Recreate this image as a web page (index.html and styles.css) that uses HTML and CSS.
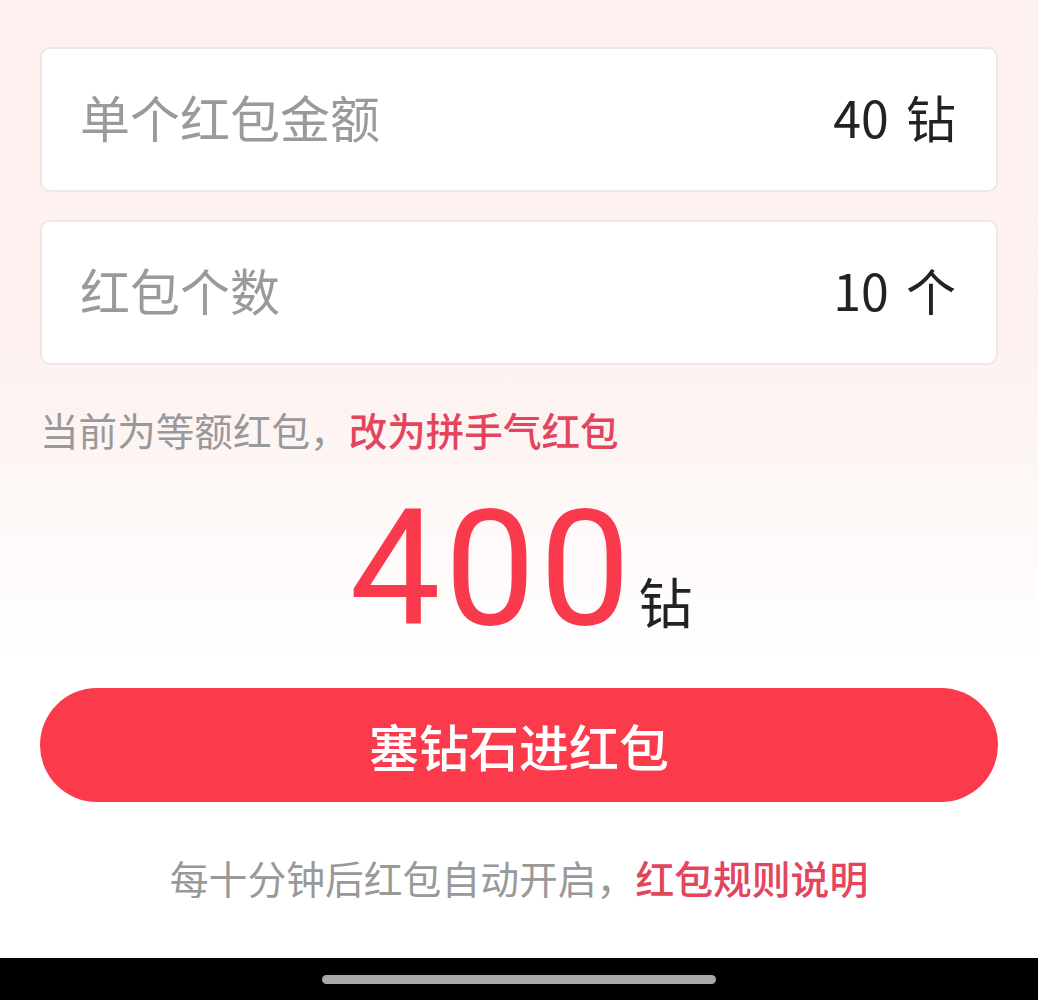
FILE: index.html
```html
<!DOCTYPE html>
<html lang="zh">
<head>
<meta charset="utf-8">
<link rel="stylesheet" href="styles.css">
</head>
<body>
<div class="page">
  <div class="content">
    <div class="field">
      <span class="label">单个红包金额</span>
      <span class="value">40 钻</span>
    </div>
    <div class="field">
      <span class="label">红包个数</span>
      <span class="value">10 个</span>
    </div>
    <p class="hint">当前为等额红包，<span class="link">改为拼手气红包</span></p>
    <div class="total"><span class="amount">400</span><span class="unit">钻</span></div>
    <button class="submit">塞钻石进红包</button>
    <p class="note">每十分钟后红包自动开启，<span class="link">红包规则说明</span></p>
  </div>
  <div class="navbar"><div class="home"></div></div>
</div>
</body>
</html>
```

FILE: styles.css
```css
* { box-sizing: border-box; }
html, body { margin: 0; padding: 0; }
body {
  font-family: "Noto Sans CJK SC", "Noto Sans", sans-serif;
  width: 1038px;
  height: 1000px;
  overflow: hidden;
}
.page {
  height: 1000px;
  display: flex;
  flex-direction: column;
  background: linear-gradient(180deg, #fdf1f0 0%, #fdf3f1 40%, #ffffff 66%, #ffffff 100%);
}
.content {
  flex: 1;
  padding: 47px 40px 0;
  display: flex;
  flex-direction: column;
}
.field {
  height: 145px;
  background: #fff;
  border: 2px solid #f1e6e5;
  border-radius: 10px;
  display: flex;
  align-items: center;
  justify-content: space-between;
  padding: 0 40px 8px 38px;
  margin-bottom: 28px;
}
.label {
  font-size: 50px;
  color: #9a9a9a;
  line-height: 1;
}
.value {
  font-size: 50px;
  color: #222;
  line-height: 1;
  word-spacing: 6px;
}
.hint {
  margin: 11px 0 0;
  font-size: 38.6px;
  line-height: 1.3;
  color: #999;
}
.link { color: #e3455c; }
.hint .link { font-weight: 500; }
.total {
  margin-top: 34px;
  height: 142px;
  display: flex;
  justify-content: center;
  align-items: baseline;
  padding-left: 4px;
}
.amount {
  font-family: Roboto, "Noto Sans", sans-serif;
  font-size: 162px;
  line-height: 1;
  color: #f93a4d;
  letter-spacing: 4px;
}
.unit {
  font-size: 54px;
  color: #222;
  margin-left: 4px;
}
.submit {
  margin-top: 58px;
  height: 114px;
  border: none;
  border-radius: 57px;
  background: #fb3a4c;
  color: #fff;
  font-family: "Noto Sans CJK SC", sans-serif;
  font-size: 50px;
  font-weight: 500;
  padding: 0;
}
.note {
  margin: 50px 0 0;
  text-align: center;
  font-size: 38.8px;
  line-height: 1.3;
  color: #999;
}
.note .link { font-weight: 500; }
.navbar {
  height: 42px;
  background: #000;
  display: flex;
  justify-content: center;
  align-items: center;
}
.home {
  width: 394px;
  height: 9px;
  border-radius: 5px;
  background: #a8a8a8;
}
```
